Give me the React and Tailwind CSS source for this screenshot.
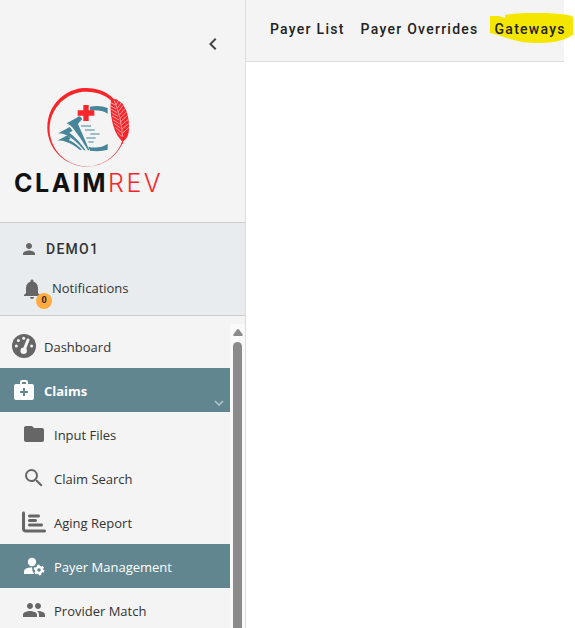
// App.jsx — ClaimRev shell: sidebar navigation + payer sub menu
import React, { useState } from 'react';
import {
  MdChevronLeft, MdFolder, MdGroup, MdKeyboardArrowDown,
  MdMedicalServices, MdNotifications, MdPerson, MdSearch,
} from 'react-icons/md';
import { FaChartBar } from 'react-icons/fa6';

const GaugeIcon = ({ className }) => (
  <svg viewBox="0 0 24 24" className={className} aria-hidden="true">
    <circle cx="12" cy="12" r="12" fill="currentColor" />
    <g fill="#f4f4f4">
      <circle cx="11.7" cy="4.2" r="1.5" />
      <circle cx="6.4" cy="6.6" r="1.5" />
      <circle cx="4.3" cy="12" r="1.5" />
      <circle cx="19.6" cy="12" r="1.5" />
      <circle cx="11.7" cy="16.7" r="3.2" />
    </g>
    <path fill="none" stroke="#f4f4f4" strokeWidth="3" strokeLinecap="round" d="M16 6L12.3 15.5" />
  </svg>
);

const UserGearIcon = ({ className }) => (
  <svg viewBox="0 0 24 24" className={className} aria-hidden="true">
    <circle cx="10" cy="8" r="4.200" fill="currentColor" />
    <path fill="currentColor" d="M10 13.200Q10 17 12 20H2V17.500Q2 13.600 10 13.200Z" />
    <circle cx="17" cy="16" r="3" fill="none" stroke="currentColor" strokeWidth="2.400" />
    <circle cx="17" cy="16" r="4.600" fill="none" stroke="currentColor" strokeWidth="1.600" strokeDasharray="2.400 2.417" />
  </svg>
);

const TABS = ['Payer List', 'Payer Overrides', 'Gateways'];

const CLAIM_LINKS = [
  { label: 'Input Files', Icon: MdFolder },
  { label: 'Claim Search', Icon: MdSearch },
  { label: 'Aging Report', Icon: FaChartBar },
  { label: 'Payer Management', Icon: UserGearIcon },
  { label: 'Provider Match', Icon: MdGroup },
];

const Logo = () => (
  <a href="#home" className="ml-[14px] mt-6 flex flex-col items-center self-start">
    <svg viewBox="120 30 288 273" className="h-[91px] w-24" aria-hidden="true">
      {/* tapered ring */}
      <path fill="#f8262b" d="M338 86A118 118 0 1 0 367 214L364 212A112 112 0 1 1 334 95Z" />
      {/* open pages */}
      <g fill="#46859a">
        <path d="M197 160L226 144Q234 136 238 140L244 147Q236 155 231 162Q247 198 265 241H261Q238 202 214 172Q207 164 197 160Z" />
        <path d="M172 190L206 171L215 182L205 188Q232 208 254 241H249Q224 210 197 196Q186 190 172 190Z" />
        <path d="M169 212L199 196L209 205L203 210Q226 220 243 240H237Q216 222 196 216Q184 211 169 212Z" />
        <path d="M267 110Q296 104 320 114V131Q298 118 267 122Z" />
        <path d="M262 230Q296 238 320 221V239Q297 246 267 242Z" />
      </g>
      <path stroke="#7fa9b8" strokeWidth="4" d="M240 168H270M252 180H281M268 192H296M256 204H284M262 216H278" />
      <path fill="#f8262b" d="M247 105H263V121H280V137H263V153H247V137H230V121H247Z" />
      {/* quill */}
      <path fill="#f8262b" d="M331 86L346 88L365 101Q387 135 384 180Q382 203 368 213L362 213Q338 190 330 136Q327 104 331 86Z" />
      <g fill="none" stroke="#f8e4e4" strokeWidth="2">
        <path d="M340 92Q360 140 365 200" />
        <path d="M330 98L342 105M330 108L345 117M331 118L348 128M332 128L351 139M333 138L354 150M336 149L356 162M339 160L358 174M343 172L361 187M349 186L363 200" />
        <path d="M346 104L352 92M350 114L360 99M353 124L366 106M356 134L371 116M358 144L376 126M360 154L379 137M362 165L382 148M364 176L384 160M366 188L384 172" />
      </g>
      <path stroke="#f8262b" strokeWidth="3" d="M365 205V222" />
    </svg>
    <span className="font-[Inter,sans-serif] text-[25px] leading-6 tracking-widest text-[#111]">
      <span className="font-bold">CLAIM</span>
      <span className="font-light text-[#f8262b]">REV</span>
    </span>
  </a>
);

const NavLink = ({ label, Icon, active }) => (
  <a href="#claims" aria-current={active ? 'page' : undefined}
    className={`flex h-11 shrink-0 items-center gap-2 pl-[22px] ${active ? 'bg-[#62868f] text-white' : 'text-[#333]'}`}>
    <Icon className={`size-6 ${active ? 'text-white' : 'text-[#666]'}`} />
    <span className="pt-[3px]">{label}</span>
  </a>
);

const App = () => {
  const [open, setOpen] = useState(true);

  return (
    <div className="flex h-screen overflow-hidden bg-white font-['Open_Sans',sans-serif] text-[13px]">
      <aside className="flex w-[246px] shrink-0 flex-col border-r border-[#ddd] bg-[#f4f4f4]">
        <button type="button" aria-label="Collapse menu" className="mr-5 mt-8 self-end text-[#444]">
          <MdChevronLeft className="size-6" />
        </button>
        <Logo />

        {/* Account */}
        <div className="mt-[27px] flex flex-col gap-3 border-y border-[#ccc] bg-[#e8ecef] py-3 pl-5 text-[#333]">
          <button type="button" className="flex h-7 items-center gap-2 font-[Roboto,sans-serif] text-sm font-medium tracking-[0.09em]">
            <MdPerson className="size-[18px] text-[#666]" />
            DEMO1
          </button>
          <a href="#notifications" className="flex h-7 items-center gap-2">
            <span className="relative">
              <MdNotifications className="size-6 text-[#666]" />
              <span className="absolute -bottom-2 -right-2 flex size-4 items-center justify-center rounded-full bg-[#ffab40] font-[Roboto,sans-serif] text-[9px] font-bold text-[#222]">0</span>
            </span>
            Notifications
          </a>
        </div>

        <div className="mt-2 flex min-h-0 flex-1">
          <nav className="flex flex-1 flex-col overflow-hidden">
            <a href="#dashboard" className="flex h-11 shrink-0 items-center gap-2 pl-3 text-[#333]">
              <GaugeIcon className="size-6 text-[#666]" />
              <span className="pt-[3px]">Dashboard</span>
            </a>
            <button type="button" aria-expanded={open} onClick={() => setOpen(!open)}
              className="flex h-11 shrink-0 items-center gap-2 bg-[#62868f] pl-3 text-left font-bold text-white">
              <MdMedicalServices className="size-6" />
              <span className="flex-1 pt-[3px]">Claims</span>
              <MdKeyboardArrowDown className="mr-0.5 size-[18px] self-end text-[#b4c6ca]" />
            </button>
            {open && CLAIM_LINKS.map(link => (
              <NavLink key={link.label} {...link} active={link.label === 'Payer Management'} />
            ))}
          </nav>
          {/* Scroll bar */}
          <div className="flex w-[15px] flex-col items-center gap-1.5 bg-[#fafafa] pt-[5px]">
            <svg viewBox="0 0 10 7" className="h-[7px] w-2.5 shrink-0" aria-hidden="true">
              <path fill="#8b8b8b" d="M4 .6Q5-.4 6 .6L9.7 5.5Q10 7 9 7H1Q0 7 .3 5.5Z" />
            </svg>
            <div className="w-[9px] flex-1 rounded-t-full bg-[#8b8b8b]" />
          </div>
        </div>
      </aside>

      <main className="min-w-0 flex-1 pr-[11px]">
        <nav className="flex h-[62px] items-center gap-4 border-b border-[#ddd] bg-[#f4f4f4] pb-1 pl-6 font-[Roboto,sans-serif] text-sm font-medium tracking-[0.09em] text-[#222]">
          {TABS.map(tab => (
            <a key={tab} href="#payers" className="relative shrink-0">
              {tab === 'Gateways' && (
                <svg viewBox="0 0 83 30" className="absolute -left-[5px] -top-[6px] h-[30px] w-[83px]" aria-hidden="true">
                  <path fill="#f5e600" d="M0 3H9L15 5V2Q42-2 70 1Q81 2 83 4V22Q75 27 64 29Q48 31 32 29Q18 26 8 22L0 20Z" />
                </svg>
              )}
              <span className="relative">{tab}</span>
            </a>
          ))}
        </nav>
      </main>
    </div>
  );
};

export default App;
